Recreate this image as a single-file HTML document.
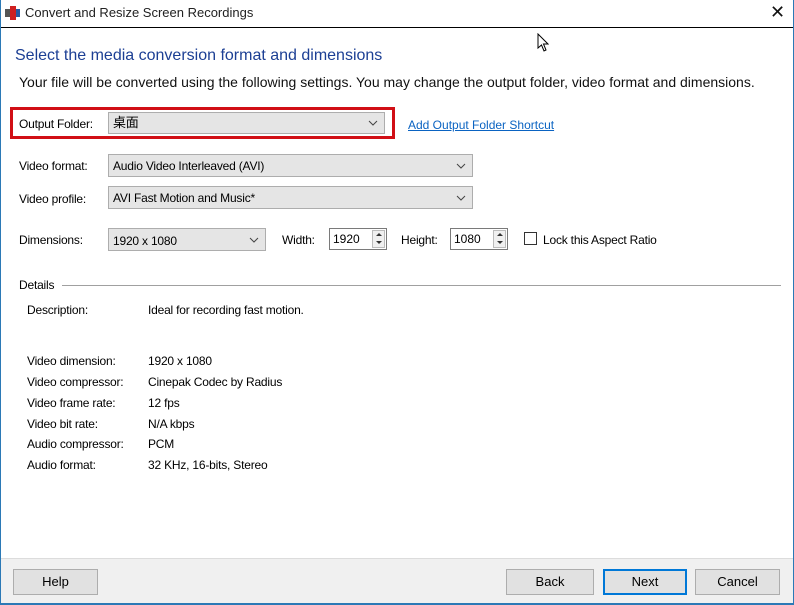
<!DOCTYPE html><html><head><style>
body{margin:0;width:794px;height:605px;overflow:hidden;background:#fff;font-family:"Liberation Sans",Arial,sans-serif;position:relative;color:#000}
.a{position:absolute;white-space:nowrap}
.l{font-size:12px;letter-spacing:-0.2px}
.dd{position:absolute;background:#e5e5e5;border:1px solid #adadad;box-sizing:border-box;font-size:12px;padding:0 4px;letter-spacing:-0.2px}
.dd svg{position:absolute;right:6px;top:50%;margin-top:-3px}
.sp{position:absolute;border:1px solid #7a7a7a;box-sizing:border-box;background:#fff;font-size:12px;padding-left:3px}
.sp i{position:absolute;right:1px;top:1px;width:13px;height:18px;border:1px solid #bbb;box-sizing:border-box;background:#f0f0f0}
.sp i:before{content:"";position:absolute;left:3px;top:2px;border:3px solid transparent;border-bottom:3px solid #333;border-top:0}
.sp i:after{content:"";position:absolute;left:3px;top:10px;border:3px solid transparent;border-top:3px solid #333;border-bottom:0}
.btn{position:absolute;background:#e1e1e1;border:1px solid #adadad;box-sizing:border-box;font-size:13px;text-align:center}
</style></head><body>
<div class="a" style="left:0;top:0;width:1px;height:605px;background:#2b79b6"></div>
<div class="a" style="left:793px;top:0;width:1px;height:605px;background:#2b79b6"></div>
<svg class="a" style="left:5px;top:6px" width="16" height="14"><rect x="0" y="3" width="5" height="8" fill="#555"/><rect x="5" y="0" width="6" height="14" fill="#d02020"/><rect x="11" y="3" width="4" height="8" fill="#2a5aa0"/></svg>
<div class="a" style="left:25px;top:5px;font-size:13px;color:#222">Convert and Resize Screen Recordings</div>
<div class="a" style="left:770px;top:2px;font-size:18px;color:#111">✕</div>
<div class="a" style="left:1px;top:27px;width:792px;height:1px;background:#000"></div>
<svg class="a" style="left:537px;top:33px" width="12" height="19"><path d="M1 1L1 15L4.5 12L7 18L9 17L6.5 11L11 11Z" fill="#fff" stroke="#000"/></svg>
<div class="a" style="left:15px;top:47px;font-size:16px;color:#1c3f94">Select the media conversion format and dimensions</div>
<div class="a" style="left:19px;top:74px;font-size:14px;color:#111">Your file will be converted using the following settings. You may change the output folder, video format and dimensions.</div>
<div class="a" style="left:10px;top:107px;width:385px;height:32px;border:3px solid #d10f15;box-sizing:border-box"></div>
<div class="a l" style="left:19px;top:117px">Output Folder:</div>
<div class="dd" style="left:108px;top:112px;width:277px;height:22px;line-height:20px;font-family:'Liberation Sans','Noto Sans CJK SC',sans-serif;font-size:13px">桌面<svg width="10" height="6"><path d="M1 1L5 5L9 1" stroke="#444" fill="none"/></svg></div>
<div class="a" style="left:408px;top:118px;font-size:12px;color:#0a63c2;text-decoration:underline">Add Output Folder Shortcut</div>
<div class="a l" style="left:19px;top:159px">Video format:</div>
<div class="dd" style="left:108px;top:154px;width:365px;height:23px;line-height:22px">Audio Video Interleaved (AVI)<svg width="10" height="6"><path d="M1 1L5 5L9 1" stroke="#444" fill="none"/></svg></div>
<div class="a l" style="left:19px;top:192px">Video profile:</div>
<div class="dd" style="left:108px;top:186px;width:365px;height:23px;line-height:22px">AVI Fast Motion and Music*<svg width="10" height="6"><path d="M1 1L5 5L9 1" stroke="#444" fill="none"/></svg></div>
<div class="a l" style="left:19px;top:233px">Dimensions:</div>
<div class="dd" style="left:108px;top:228px;width:158px;height:23px;line-height:24px">1920 x 1080<svg width="10" height="6"><path d="M1 1L5 5L9 1" stroke="#444" fill="none"/></svg></div>
<div class="a l" style="left:282px;top:233px">Width:</div>
<div class="sp" style="left:329px;top:228px;width:58px;height:22px;line-height:20px">1920<i></i></div>
<div class="a l" style="left:401px;top:233px">Height:</div>
<div class="sp" style="left:450px;top:228px;width:58px;height:22px;line-height:20px">1080<i></i></div>
<div class="a" style="left:524px;top:232px;width:13px;height:13px;border:1px solid #333;box-sizing:border-box"></div>
<div class="a l" style="left:543px;top:233px">Lock this Aspect Ratio</div>
<div class="a l" style="left:19px;top:278px">Details</div>
<div class="a" style="left:62px;top:285px;width:719px;height:1px;background:#a0a0a0"></div>
<div class="a l" style="left:27px;top:303px">Description:</div><div class="a l" style="left:148px;top:303px">Ideal for recording fast motion.</div>
<div class="a l" style="left:27px;top:354px">Video dimension:</div><div class="a l" style="left:148px;top:354px">1920 x 1080</div>
<div class="a l" style="left:27px;top:375px">Video compressor:</div><div class="a l" style="left:148px;top:375px">Cinepak Codec by Radius</div>
<div class="a l" style="left:27px;top:396px">Video frame rate:</div><div class="a l" style="left:148px;top:396px">12 fps</div>
<div class="a l" style="left:27px;top:417px">Video bit rate:</div><div class="a l" style="left:148px;top:417px">N/A kbps</div>
<div class="a l" style="left:27px;top:437px">Audio compressor:</div><div class="a l" style="left:148px;top:437px">PCM</div>
<div class="a l" style="left:27px;top:458px">Audio format:</div><div class="a l" style="left:148px;top:458px">32 KHz, 16-bits, Stereo</div>
<div class="a" style="left:1px;top:558px;width:792px;height:46px;background:#f0f0f0;border-top:1px solid #dcdcdc"></div>
<div class="a" style="left:0;top:603px;width:794px;height:2px;background:#2b79b6"></div>
<div class="btn" style="left:13px;top:569px;width:85px;height:26px;line-height:24px">Help</div>
<div class="btn" style="left:506px;top:569px;width:88px;height:26px;line-height:24px">Back</div>
<div class="btn" style="left:603px;top:569px;width:84px;height:26px;line-height:22px;border:2px solid #0078d7">Next</div>
<div class="btn" style="left:695px;top:569px;width:85px;height:26px;line-height:24px">Cancel</div>
</body></html>
